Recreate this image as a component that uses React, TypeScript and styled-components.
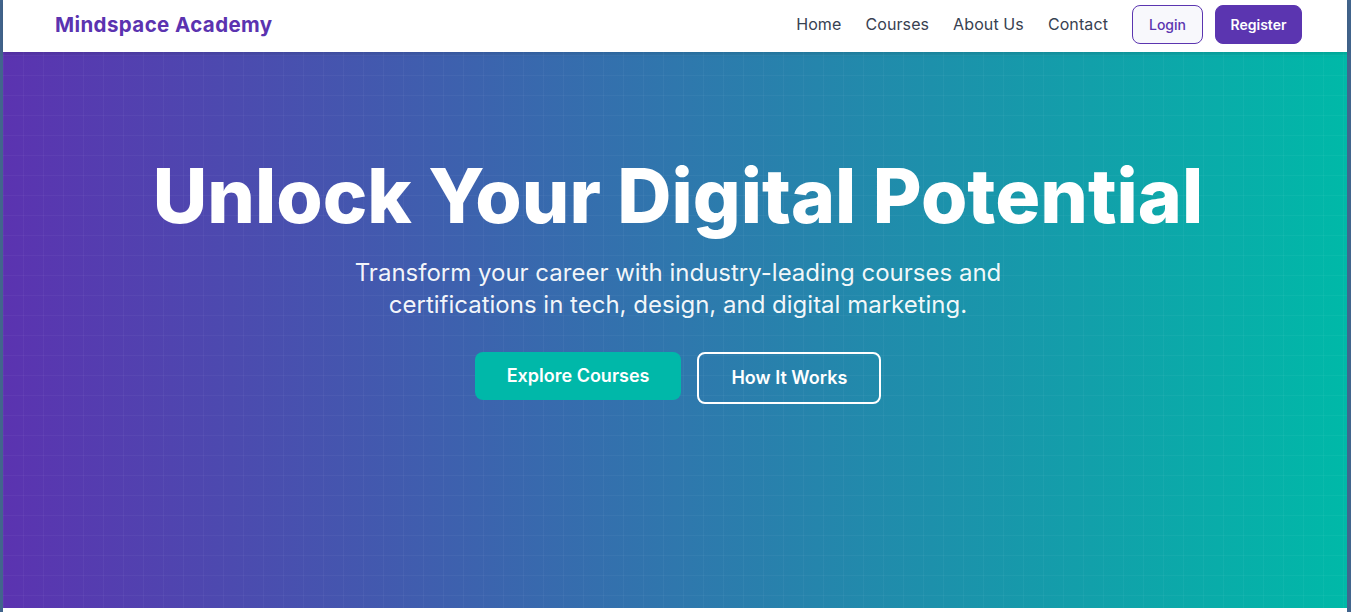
import React from "react";
import styled, { createGlobalStyle } from "styled-components";

const GlobalStyle = createGlobalStyle`
  * {
    box-sizing: border-box;
  }
  body {
    margin: 0;
    background: #ffffff;
    font-family: Inter, "Liberation Sans", sans-serif;
  }
`;

const Frame = styled.div`
  min-height: 100vh;
  border-left: 3px solid #42658d;
  border-right: 4px solid #42658d;
  background: #ffffff;
`;

const Header = styled.header`
  position: relative;
  z-index: 2;
  display: flex;
  justify-content: space-between;
  align-items: center;
  height: 52px;
  padding: 0 45px 4px 52px;
  background: #ffffff;
  box-shadow: 0 2px 4px rgba(0, 0, 0, 0.12);
`;

const Logo = styled.div`
  font-size: 20.5px;
  font-weight: 700;
  color: #5b33b0;
  letter-spacing: 0.4px;
`;

const Nav = styled.nav`
  display: flex;
  align-items: center;
`;

const NavLink = styled.a`
  margin-right: 24px;
  font-size: 16px;
  letter-spacing: 0.1px;
  color: #374151;
  text-decoration: none;
  cursor: pointer;
`;

const AuthButton = styled.button<{ $primary?: boolean }>`
  height: 39px;
  padding: 0 ${(p) => (p.$primary ? "14.5px" : "16px")};
  margin-left: ${(p) => (p.$primary ? "12px" : "0")};
  border: 1px solid #5b35b0;
  border-radius: 8px;
  background: ${(p) => (p.$primary ? "#5b35b0" : "#f8f8fc")};
  color: ${(p) => (p.$primary ? "#ffffff" : "#5b35b0")};
  font-family: Inter, "Liberation Sans", sans-serif;
  font-size: 14px;
  font-weight: ${(p) => (p.$primary ? 600 : 500)};
  cursor: pointer;
`;

const Hero = styled.section`
  display: flex;
  flex-direction: column;
  align-items: center;
  height: 556px;
  padding: 103px 0 0 6px;
  color: #ffffff;
  text-align: center;
  background-image: linear-gradient(
      rgba(255, 255, 255, 0.035) 1px,
      transparent 1px
    ),
    linear-gradient(90deg, rgba(255, 255, 255, 0.035) 1px, transparent 1px),
    linear-gradient(90deg, #5b33b0 0%, #2f77ad 50%, #00b9a8 100%);
  background-size: 20px 20px, 20px 20px, 100% 100%;
  background-position: 0 3px, 0 0, 0 0;
`;

const Title = styled.h1`
  margin: 0 0 19px;
  font-size: 75px;
  line-height: 1.1;
  font-weight: 800;
  letter-spacing: 0;
`;

const Subtitle = styled.p`
  max-width: 700px;
  margin: 0 0 31px;
  font-size: 24px;
  line-height: 32px;
  color: rgba(255, 255, 255, 0.95);
`;

const Actions = styled.div`
  display: flex;
  align-items: flex-start;
  gap: 16px;
`;

const CtaButton = styled.button<{ $outline?: boolean }>`
  padding: 14px 32px;
  border: ${(p) => (p.$outline ? "2px solid #ffffff" : "none")};
  border-radius: 8px;
  background: ${(p) => (p.$outline ? "transparent" : "#00b8a9")};
  color: #ffffff;
  font-family: Inter, "Liberation Sans", sans-serif;
  font-size: 18px;
  line-height: 20px;
  font-weight: 600;
  cursor: pointer;
`;

function App() {
  return (
    <Frame>
      <GlobalStyle />
      <Header>
        <Logo>Mindspace Academy</Logo>
        <Nav>
          <NavLink>Home</NavLink>
          <NavLink>Courses</NavLink>
          <NavLink>About Us</NavLink>
          <NavLink>Contact</NavLink>
          <AuthButton>Login</AuthButton>
          <AuthButton $primary>Register</AuthButton>
        </Nav>
      </Header>
      <Hero>
        <Title>Unlock Your Digital Potential</Title>
        <Subtitle>
          Transform your career with industry-leading courses and
          certifications in tech, design, and digital marketing.
        </Subtitle>
        <Actions>
          <CtaButton>Explore Courses</CtaButton>
          <CtaButton $outline>How It Works</CtaButton>
        </Actions>
      </Hero>
    </Frame>
  );
}

export default App;
